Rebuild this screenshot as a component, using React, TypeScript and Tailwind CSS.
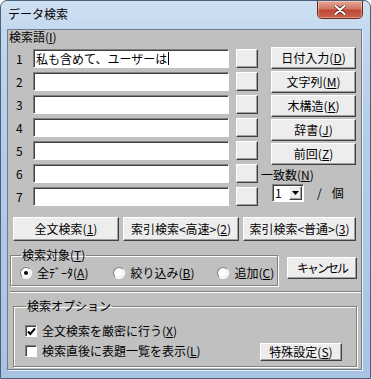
import type { ReactNode } from 'react';

const FONT = "font-['Noto_Sans_CJK_JP','Noto_Sans_CJK_SC',sans-serif]";

const raised =
  'bg-[#ededed] border border-t-white border-l-white border-r-[#404040] border-b-[#404040] shadow-[inset_-1px_-1px_0_#a0a0a0]';
const sunken =
  'bg-white border border-t-[#808080] border-l-[#808080] border-r-white border-b-white shadow-[inset_1px_1px_0_#404040]';

function Btn({ className, children }: { className: string; children?: ReactNode }) {
  return (
    <div className={`${raised} flex items-center justify-center leading-[14px] whitespace-nowrap text-black ${className}`}>
      {children}
    </div>
  );
}

function Key({ k }: { k: string }) {
  return (
    <>
      (<u className="underline-offset-1">{k}</u>)
    </>
  );
}

function Radio({ on }: { on?: boolean }) {
  return (
    <span className="w-[12px] h-[12px] rounded-full border border-t-[#808080] border-l-[#808080] border-r-white border-b-white bg-[radial-gradient(circle_at_45%_45%,#ffffff_40%,#d8d8d8_100%)] flex items-center justify-center shrink-0">
      {on && <span className="w-[4px] h-[4px] rounded-full bg-black" />}
    </span>
  );
}

function Check({ on }: { on?: boolean }) {
  return (
    <span className={`w-[12px] h-[12px] ${sunken} flex items-center justify-center shrink-0`}>
      {on && (
        <svg width="9" height="9" viewBox="0 0 9 9">
          <path d="M1 4.5 L3.3 7 L8 1.5" stroke="#000" strokeWidth="2" fill="none" />
        </svg>
      )}
    </span>
  );
}

const ROWS = ['私も含めて、ユーザーは', '', '', '', '', '', ''];

export default function App() {
  return (
    <div
      className={`${FONT} text-[12px] text-black w-[371px] h-[379px] overflow-hidden rounded-t-[7px] border border-[#4d6079] bg-[linear-gradient(180deg,#cfe0f2_0%,#bed5ee_12%,#b3cce8_40%,#a9c4e3_100%)]`}
    >
      {/* title bar */}
      <div className="h-[28px] flex items-start justify-between pl-[7px]">
        <span className="mt-[6px] leading-[14px]">データ検索</span>
        <div className="mr-[7px] w-[46px] h-[19px] -mt-px rounded-b-[5px] border border-[#6b2a20] bg-[linear-gradient(180deg,#e7a898_0%,#d27563_45%,#bf4a33_55%,#c9614a_100%)] shadow-[inset_0_0_0_1px_rgba(255,255,255,0.35)] flex items-center justify-center">
          <svg width="12" height="10" viewBox="0 0 12 10">
            <path d="M1.5 1 L10.5 9 M10.5 1 L1.5 9" stroke="#5a1a10" strokeWidth="3.6" strokeLinecap="round" />
            <path d="M1.5 1 L10.5 9 M10.5 1 L1.5 9" stroke="#fff" strokeWidth="2.2" strokeLinecap="round" />
          </svg>
        </div>
      </div>

      {/* client area */}
      <div className="ml-[6px] w-[355px] h-[341px] border border-[#6d7d8f] bg-[#c0c0c0] shadow-[1px_1px_0_#e8f0f8]">
        <div className="leading-[14px] pl-px">
          検索語<Key k="I" />
        </div>

        <div className="flex">
          {/* entry rows */}
          <div className="flex flex-col gap-[4px] mt-[5px] w-[254px]">
            {ROWS.map((v, i) => (
              <div key={i} className="flex items-center h-[19px]">
                <span className="w-[25px] pl-[8px] leading-[14px]">{i + 1}</span>
                <div className={`${sunken} w-[196px] h-[19px] flex items-center pl-[2px] leading-[14px] whitespace-nowrap overflow-hidden`}>
                  {v}
                  {i === 0 && <span className="w-px h-[13px] bg-black ml-px" />}
                </div>
                <Btn className="ml-[7px] w-[22px] h-[19px]" />
              </div>
            ))}
          </div>

          {/* right column */}
          <div className="flex flex-col mt-[3px]">
            <div className="flex flex-col gap-[2px] ml-[9px]">
              <Btn className="w-[85px] h-[22px]">日付入力<Key k="D" /></Btn>
              <Btn className="w-[85px] h-[22px]">文字列<Key k="M" /></Btn>
              <Btn className="w-[85px] h-[22px]">木構造<Key k="K" /></Btn>
              <Btn className="w-[85px] h-[22px]">辞書<Key k="J" /></Btn>
              <Btn className="w-[85px] h-[22px]">前回<Key k="Z" /></Btn>
            </div>
            <div className="mt-[3px] leading-[14px] -ml-[1px] whitespace-nowrap">
              一致数<Key k="N" />
            </div>
            <div className="flex items-center mt-[2px] ml-[10px]">
              <div className={`${sunken} w-[32px] h-[18px] flex items-center pl-[2px]`}>
                <span className="flex-1 leading-[14px]">1</span>
                <div className={`${raised} w-[13px] h-[14px] mr-px flex items-center justify-center`}>
                  <svg width="7" height="4" viewBox="0 0 7 4">
                    <path d="M0 0 H7 L3.5 4 Z" fill="#000" />
                  </svg>
                </div>
              </div>
              <span className="ml-[13px]">/</span>
              <span className="ml-[10px]">個</span>
            </div>
          </div>
        </div>

        {/* search buttons */}
        <div className="flex mt-[11px] ml-[5px] gap-[5px]">
          <Btn className="w-[106px] h-[24px]">全文検索<Key k="1" /></Btn>
          <Btn className="w-[116px] h-[24px] -ml-px">索引検索&lt;高速&gt;<Key k="2" /></Btn>
          <Btn className="w-[113px] h-[24px] -ml-px">索引検索&lt;普通&gt;<Key k="3" /></Btn>
        </div>

        {/* target */}
        <div className="flex mt-[7px]">
          <fieldset className="ml-[2px] w-[268px] h-[38px] border border-[#808080] shadow-[inset_1px_1px_0_#fff,1px_1px_0_#fff] pl-[9px]">
            <legend className="px-px leading-[14px] ml-[1px] whitespace-nowrap">
              検索対象<Key k="T" />
            </legend>
            <div className="flex items-center h-[22px] gap-[5px] whitespace-nowrap">
              <Radio on />
              <span className="leading-[14px] mr-[20px]">全ﾃﾞｰﾀ<Key k="A" /></span>
              <Radio />
              <span className="leading-[14px] mr-[18px]">絞り込み<Key k="B" /></span>
              <Radio />
              <span className="leading-[14px]">追加<Key k="C" /></span>
            </div>
          </fieldset>
          <Btn className="ml-[9px] mt-[9px] w-[70px] h-[22px] tracking-[-2px]">キャンセル</Btn>
        </div>

        {/* separator */}
        <div className="mt-[5px] ml-[2px] h-[2px] border-t border-[#808080] border-b border-b-white" />

        {/* options */}
        <fieldset className="mt-[6px] ml-[5px] w-[344px] h-[68px] border border-[#808080] shadow-[inset_1px_1px_0_#fff,1px_1px_0_#fff] pl-[11px]">
          <legend className="px-px leading-[14px] ml-[1px]">検索オプション</legend>
          <div className="flex items-center h-[20px] mt-[8px] gap-[5px]">
            <Check on />
            <span className="leading-[14px]">全文検索を厳密に行う<Key k="X" /></span>
          </div>
          <div className="flex items-center h-[20px] gap-[5px]">
            <Check />
            <span className="leading-[14px]">検索直後に表題一覧を表示<Key k="L" /></span>
            <Btn className="ml-auto mr-[14px] w-[82px] h-[18px] mt-[2px]">特殊設定<Key k="S" /></Btn>
          </div>
        </fieldset>
      </div>
    </div>
  );
}
